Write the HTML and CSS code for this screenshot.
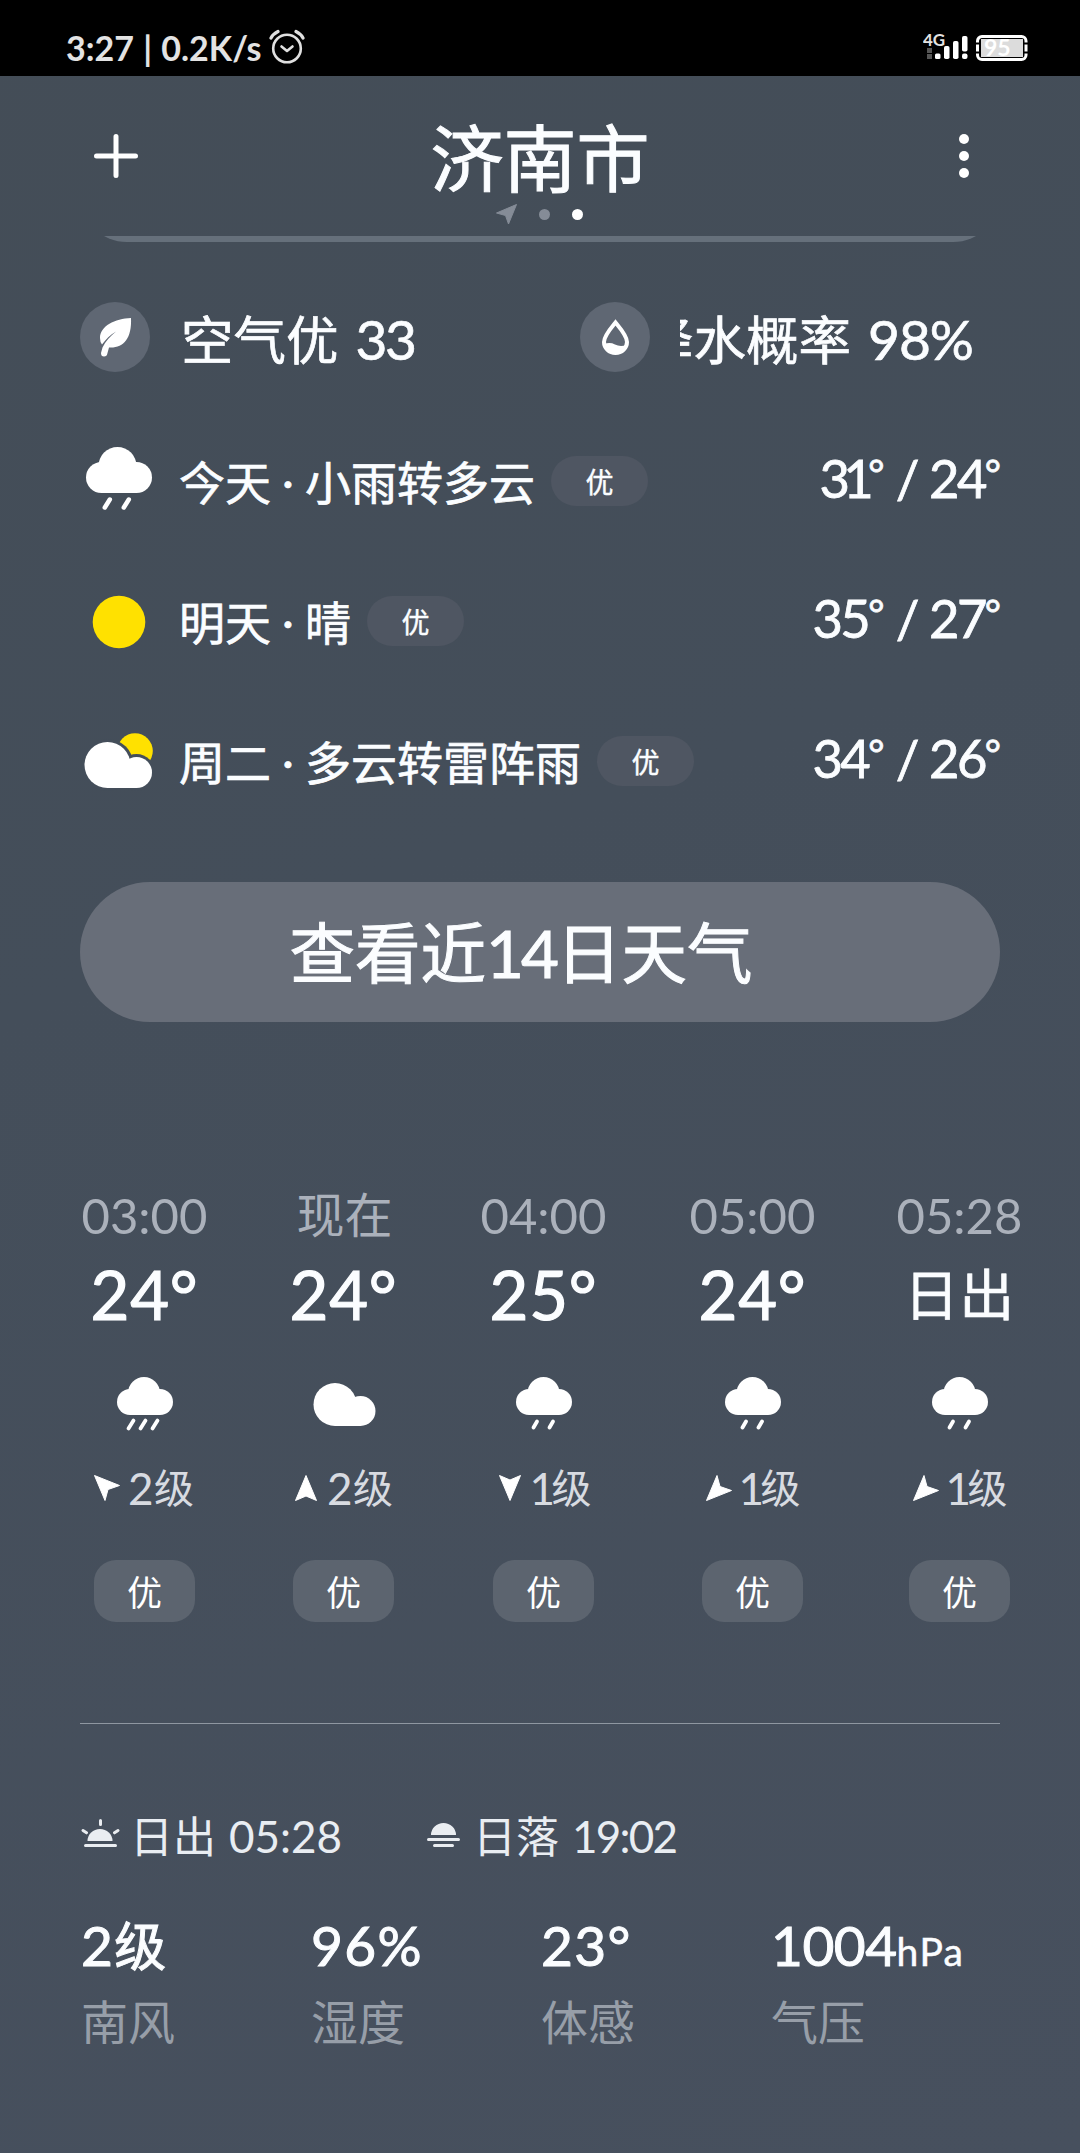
FILE: index.html
```html
<!DOCTYPE html>
<html lang="zh-CN">
<head>
<meta charset="utf-8">
<title>济南市天气</title>
<link rel="stylesheet" href="styles.css">
</head>
<body>
<svg class="defs" width="0" height="0">
  <symbol id="drizzle" viewBox="0 0 70 70">
    <rect x="7" y="19" width="56" height="26" rx="13"/>
    <circle cx="34.500" cy="23" r="16"/>
    <path d="M28 51.500l-3.500 6M44 51.500l-3.500 6" class="drop"/>
  </symbol>
  <symbol id="rain" viewBox="0 0 70 70">
    <rect x="7" y="19" width="56" height="26" rx="13"/>
    <circle cx="34" cy="23" r="16"/>
    <path d="M23.500 50.500l-5 8M35.500 50.500l-5 8M47.500 50.500l-5 8" class="drop"/>
  </symbol>
  <symbol id="cloud" viewBox="0 0 70 70">
    <circle cx="26" cy="34.500" r="21.500"/>
    <circle cx="51.500" cy="41" r="15"/>
    <rect x="26" y="34" width="25.500" height="22"/>
  </symbol>
  <symbol id="wind-n" viewBox="0 0 26 26"><path d="M13 0.500L23.500 25.500L13 21L2.500 25.500Z"/></symbol>
  <symbol id="wind-s" viewBox="0 0 26 26"><path d="M13 25.500L23.500 0.500L13 5L2.500 0.500Z"/></symbol>
  <symbol id="wind-nw" viewBox="0 0 26 26"><path d="M0.500 0.500L25.500 10.500L14 14.500L11 25.500Z"/></symbol>
  <symbol id="wind-sw" viewBox="0 0 26 26"><path d="M0.500 25.500L25.500 15.500L14 11.500L11 0.500Z"/></symbol>
</svg>

<div class="statusbar">
  <div class="status-left">
    <span class="clock">3:27 | 0.2K/s</span>
    <svg width="36" height="36" viewBox="0 0 36 36" class="line-icon">
      <circle cx="18" cy="19.500" r="13.800" stroke-width="2.600"/>
      <path d="M12.500 17.500l5.500 4.500 5.500-4.500" stroke-width="2.600"/>
      <path d="M2 9Q4 5 9 2.500M27 2.500Q32 5 34 9" stroke-width="3.200"/>
    </svg>
  </div>
  <div class="status-right">
    <svg width="46" height="30" viewBox="0 0 46 30">
      <text x="0" y="13.500" class="net">4G</text>
      <path d="M4 16h5v5H4zM4 22h5v5H4z" fill="#555"/>
      <rect x="12" y="21.500" width="5.500" height="5.500" rx="1.500"/>
      <rect x="21" y="14" width="5.500" height="13" rx="1.800"/>
      <rect x="30" y="9" width="5.500" height="18" rx="1.800"/>
      <rect x="39" y="4" width="5.500" height="15.500" rx="1.800"/>
      <rect x="39" y="21.500" width="5.500" height="5.500" rx="2"/>
    </svg>
    <svg width="52" height="30" viewBox="0 0 52 30">
      <rect x="1.500" y="4.500" width="48.500" height="23" rx="4.500" fill="none" stroke="#fff" stroke-width="3"/>
      <path d="M0 11.500h4M0 20.500h4M48 11.500h4M48 20.500h4" stroke="#000" stroke-width="2"/>
      <rect x="5" y="7" width="42" height="18" fill="#dcdcdc"/>
      <text x="8" y="24" class="charge">95</text>
    </svg>
  </div>
</div>

<header class="header">
  <div class="title-row">
    <svg width="44" height="44" viewBox="0 0 44 44" class="line-icon white"><path d="M22 2.500v39M2.500 22h39" stroke-width="5"/></svg>
    <h1>济南市</h1>
    <svg width="44" height="44" viewBox="0 0 44 44" fill="#fff"><circle cx="22" cy="5" r="5"/><circle cx="22" cy="22" r="5"/><circle cx="22" cy="39" r="5"/></svg>
  </div>
  <div class="pager">
    <svg width="21" height="21" viewBox="0 0 21 21"><path d="M20.500 0.500L12.500 20L9.500 11.500L0.500 9Z" fill="#858c97" stroke="#858c97" stroke-linejoin="round"/></svg>
    <i class="dot"></i>
    <i class="dot active"></i>
  </div>
</header>

<main>
  <div class="alert-clip"><div class="alert-card"></div></div>

  <section class="summary">
    <div class="metric">
      <span class="badge"><svg width="70" height="70" viewBox="0 0 70 70">
        <path d="M51 16C35 16.500 20 24 20 36Q20 40 22 42.500C26 37 30 33 36 29.500C30 34.500 25.500 39 22.500 45.500L21 51Q21 54.500 24 54.500T27.500 51L29 45.500C43 46.500 52 37 51 16Z" fill="#fff"/>
      </svg></span>
      <span class="metric-text">空气优<span class="num">33</span></span>
    </div>
    <div class="metric">
      <span class="badge"><svg width="70" height="70" viewBox="0 0 70 70">
        <path d="M35.500 20.500C31 26 24 34 24 40A11.500 11 0 0 0 47 40C47 34 40 26 35.500 20.500Z" fill="none" stroke="#fff" stroke-width="4"/>
        <path d="M24.500 42Q30 40 35 42.500T46.500 43Q44 51 35.500 51T24.500 42Z" fill="#fff"/>
      </svg></span>
      <span class="metric-text scrolled"><span class="marquee">降水概率<span class="num">98%</span></span></span>
    </div>
  </section>

  <section class="forecast">
    <div class="day">
      <svg width="76" height="80" viewBox="80 441 76 80" fill="#fff">
        <rect x="86" y="462" width="66" height="31" rx="15.500"/>
        <circle cx="117.500" cy="466" r="19"/>
        <path d="M109.800 499.500l-5 8M128.800 499.500l-5 8" stroke="#fff" stroke-width="4.500" stroke-linecap="round"/>
      </svg>
      <span class="desc">今天<i>·</i>小雨转多云</span><span class="tag">优</span>
      <span class="range">3<b class="narrow">1</b><sup>°</sup> / 24<sup>°</sup></span>
    </div>
    <div class="day">
      <svg width="76" height="80" viewBox="80 581 76 80"><circle cx="119" cy="622" r="26.300" fill="#ffe100"/></svg>
      <span class="desc">明天<i>·</i>晴</span><span class="tag">优</span>
      <span class="range">35<sup>°</sup> / 27<sup>°</sup></span>
    </div>
    <div class="day">
      <svg width="76" height="80" viewBox="80 721 76 80">
        <circle cx="135" cy="751" r="17.800" fill="#ffe100"/>
        <g fill="#444e5a"><circle cx="107.500" cy="765" r="26"/><circle cx="136.500" cy="772.500" r="18.500"/></g>
        <g fill="#fff"><circle cx="107.500" cy="765" r="23"/><circle cx="136.500" cy="772.500" r="15.500"/><rect x="107.500" y="765" width="29" height="23"/></g>
      </svg>
      <span class="desc">周二<i>·</i>多云转雷阵雨</span><span class="tag">优</span>
      <span class="range">34<sup>°</sup> / 26<sup>°</sup></span>
    </div>
  </section>

  <button class="more" type="button">查看近<span>14</span>日天气</button>

  <section class="hourly">
    <div class="hour">
      <span class="time">03:00</span><span class="temp">24°</span>
      <svg class="sky"><use href="#rain"/></svg>
      <span class="wind"><svg><use href="#wind-nw"/></svg><b>2</b>级</span>
      <span class="aqi">优</span>
    </div>
    <div class="hour">
      <span class="time now">现在</span><span class="temp">24°</span>
      <svg class="sky"><use href="#cloud"/></svg>
      <span class="wind"><svg><use href="#wind-n"/></svg><b>2</b>级</span>
      <span class="aqi">优</span>
    </div>
    <div class="hour">
      <span class="time">04:00</span><span class="temp">25°</span>
      <svg class="sky"><use href="#drizzle"/></svg>
      <span class="wind light"><svg><use href="#wind-s"/></svg><b>1</b>级</span>
      <span class="aqi">优</span>
    </div>
    <div class="hour">
      <span class="time">05:00</span><span class="temp">24°</span>
      <svg class="sky"><use href="#drizzle"/></svg>
      <span class="wind light"><svg><use href="#wind-sw"/></svg><b>1</b>级</span>
      <span class="aqi">优</span>
    </div>
    <div class="hour">
      <span class="time">05:28</span><span class="temp event">日出</span>
      <svg class="sky"><use href="#drizzle"/></svg>
      <span class="wind light"><svg><use href="#wind-sw"/></svg><b>1</b>级</span>
      <span class="aqi">优</span>
    </div>
  </section>

  <section class="sun">
    <div class="sun-item">
      <svg width="40" height="32" viewBox="0 0 40 32">
        <path d="M7.500 22a12.500 12 0 0 1 25 0Z" fill="#eaedf1"/>
        <path d="M20.500 1.500v4M3 11.500l3.500 2.300M38 11.500l-3.500 2.300M5.500 26.500h30" stroke="#eaedf1" stroke-width="3" stroke-linecap="round"/>
      </svg>
      <span>日出<b>05:28</b></span>
    </div>
    <div class="sun-item">
      <svg width="40" height="32" viewBox="0 0 40 32">
        <path d="M8 16a12.500 12 0 0 1 25 0Z" fill="#eaedf1"/>
        <path d="M5.500 20.500h30M11.500 26.500h18" stroke="#eaedf1" stroke-width="3" stroke-linecap="round"/>
      </svg>
      <span>日落<b class="tight">19:02</b></span>
    </div>
  </section>

  <section class="stats">
    <div><p class="value">2<span class="unit-cn">级</span></p><p class="label">南风</p></div>
    <div><p class="value">96%</p><p class="label">湿度</p></div>
    <div><p class="value">23°</p><p class="label">体感</p></div>
    <div><p class="value long">1004<span class="unit">hPa</span></p><p class="label">气压</p></div>
  </section>
</main>
</body>
</html>
```
FILE: styles.css
```css
* { box-sizing: border-box; margin: 0; padding: 0; }
body {
  width: 1080px;
  height: 2153px;
  overflow: hidden;
  background: linear-gradient(160deg, #444d57 0%, #444e5a 40%, #47505e 100%);
  color: #fbfdff;
  font-family: Lato, "Noto Sans CJK SC", sans-serif;
  font-weight: 400;
  white-space: nowrap;
}
i, b { font-style: normal; font-weight: inherit; }
svg { display: block; flex: none; }
.defs { position: absolute; }
.drop { fill: none; stroke: #fff; stroke-width: 3.8; stroke-linecap: round; }
.line-icon { fill: none; stroke: #e0e0e0; stroke-linecap: round; stroke-linejoin: round; }
.line-icon.white { stroke: #fff; }

/* status bar */
.statusbar {
  display: flex;
  justify-content: space-between;
  height: 76px;
  padding: 0 52px 0 66px;
  background: #000;
}
.status-left { display: flex; gap: 7px; padding-top: 29px; }
.clock { font-size: 34px; font-weight: 700; line-height: 37px; color: #e3e3e3; word-spacing: 1px; }
.status-right { display: flex; gap: 7px; padding-top: 32px; fill: #fff; }
.net { font: 700 17px Lato, sans-serif; fill: #e3e3e3; }
.charge { font: 700 23px Lato, sans-serif; fill: #fff; }

/* header */
.header { height: 160px; padding-top: 32px; }
.title-row { display: flex; justify-content: space-between; align-items: center; height: 96px; padding: 0 94px; }
h1 { padding-top: 5px; font-size: 73px; font-weight: 400; line-height: 91px; -webkit-text-stroke: 1px currentColor; }
.pager { display: flex; justify-content: center; align-items: center; gap: 22px; height: 21px; padding-right: 1px; }
.dot { width: 11px; height: 11px; border-radius: 50%; background: #858c97; }
.dot.active { background: #fff; }

main { padding: 0 80px; }
.alert-clip { display: flex; align-items: flex-end; height: 6px; overflow: hidden; }
.alert-card { flex: none; width: 100%; height: 120px; border-radius: 47px; background: #66707b; }

/* air quality and rain chance */
.summary { display: grid; grid-template-columns: 500px 420px; margin-top: 60px; height: 70px; }
.metric { display: flex; gap: 30px; }
.badge { width: 70px; height: 70px; border-radius: 50%; background: #5f6773; }
.metric-text { flex: none; height: 76px; padding-left: 1px; font-size: 52.5px; line-height: 75px; -webkit-text-stroke: .7px currentColor; }
.metric-text.scrolled { width: 310px; padding-left: 0; overflow: hidden; }
.marquee { display: block; margin-left: -39px; }
.num { margin-left: 17px; font-size: 55px; line-height: 1; letter-spacing: -2.5px; }
.marquee .num { letter-spacing: -1px; }

/* three day forecast */
.forecast { margin-top: 39px; }
.day { display: flex; align-items: center; height: 140px; }
.desc { margin-left: 23px; padding-top: 3px; font-size: 46px; line-height: 60px; -webkit-text-stroke: .7px currentColor; }
.desc i { display: inline-block; width: 34px; text-align: center; font-size: 34px; line-height: 1; vertical-align: 5px; font-weight: 700; }
.tag { width: 97px; height: 50px; margin-left: 16px; border-radius: 25px; background: #4f5662; font-size: 28px; line-height: 52px; text-align: center; -webkit-text-stroke: .4px currentColor; }
.range { margin-left: auto; padding-bottom: 6px; font-size: 52.5px; line-height: 60px; letter-spacing: -2.6px; word-spacing: 1.5px; -webkit-text-stroke: .8px currentColor; }
.range sup { font-size: 39px; line-height: 1; letter-spacing: -1px; vertical-align: 10px; }
.narrow { margin: 0 -3px 0 -4px; }

.more {
  display: block;
  width: 920px;
  height: 140px;
  margin-top: 51px;
  padding: 2px 38px 0 0;
  border: 0;
  border-radius: 70px;
  background: #686e79;
  color: inherit;
  font: inherit;
  font-size: 65.5px;
  line-height: 138px;
  text-align: center;
  -webkit-text-stroke: 1px currentColor;
}
.more span { letter-spacing: -3px; }

/* hourly */
.hourly { display: grid; grid-template-columns: 199px 199px 201px 217px 197px; margin: 162px 0 0 -35px; }
.hour { display: flex; flex-direction: column; align-items: center; }
.time { height: 60px; padding-top: 1px; font-size: 49px; line-height: 60px; color: #abb1bb; }
.time.now { padding-left: 2px; font-size: 48px; }
.temp { height: 80px; margin-top: 10px; font-size: 67px; line-height: 80px; letter-spacing: .8px; -webkit-text-stroke: 1.2px currentColor; }
.temp.event { padding-top: 1px; font-size: 54.5px; line-height: 79px; -webkit-text-stroke-width: .7px; }
.sky { width: 70px; height: 70px; margin-top: 36px; fill: #fff; }
.wind { display: flex; align-items: center; height: 52px; margin-top: 22px; font-size: 40px; line-height: 55px; color: #d8dbe1; }
.wind svg { width: 26px; height: 26px; margin: 0 8px 0 -1px; fill: #fff; stroke: #fff; stroke-width: 1; stroke-linejoin: round; }
.wind b { width: 26px; padding-top: 1px; font-size: 44px; }
.wind.light { padding-left: 2px; }
.wind.light b { width: 22px; }
.wind.light svg { margin-right: 7px; }
.aqi { width: 101px; height: 62px; margin-top: 46px; border-radius: 22px; background: #5c646f; font-size: 35px; line-height: 64px; text-align: center; color: #fff; }

/* sunrise and sunset */
.sun { display: flex; gap: 81px; margin-top: 101px; padding-top: 81px; border-top: 1px solid #8f97a1; }
.sun-item { display: flex; align-items: center; height: 60px; font-size: 43px; line-height: 60px; color: #e9edf2; }
.sun-item span { margin-left: 10px; padding-top: 3px; }
.sun-item b { margin-left: 13px; font-size: 44px; line-height: 1; }
.sun-item .tight { margin-left: 13px; letter-spacing: -1.8px; }

/* current conditions */
.stats { display: grid; grid-template-columns: repeat(4, 230px); margin-top: 45px; }
.value { height: 70px; padding-left: 1px; font-size: 55px; line-height: 70px; letter-spacing: 1.3px; -webkit-text-stroke: 1px currentColor; }
.value.long { letter-spacing: -.5px; }
.unit-cn { font-size: 52px; line-height: 1; }
.unit { font-size: 39px; line-height: 1; letter-spacing: 1.4px; -webkit-text-stroke-width: .5px; }
.label { height: 63px; margin-top: 10px; padding-left: 1px; font-size: 47px; line-height: 64px; color: #979ea8; }
```
